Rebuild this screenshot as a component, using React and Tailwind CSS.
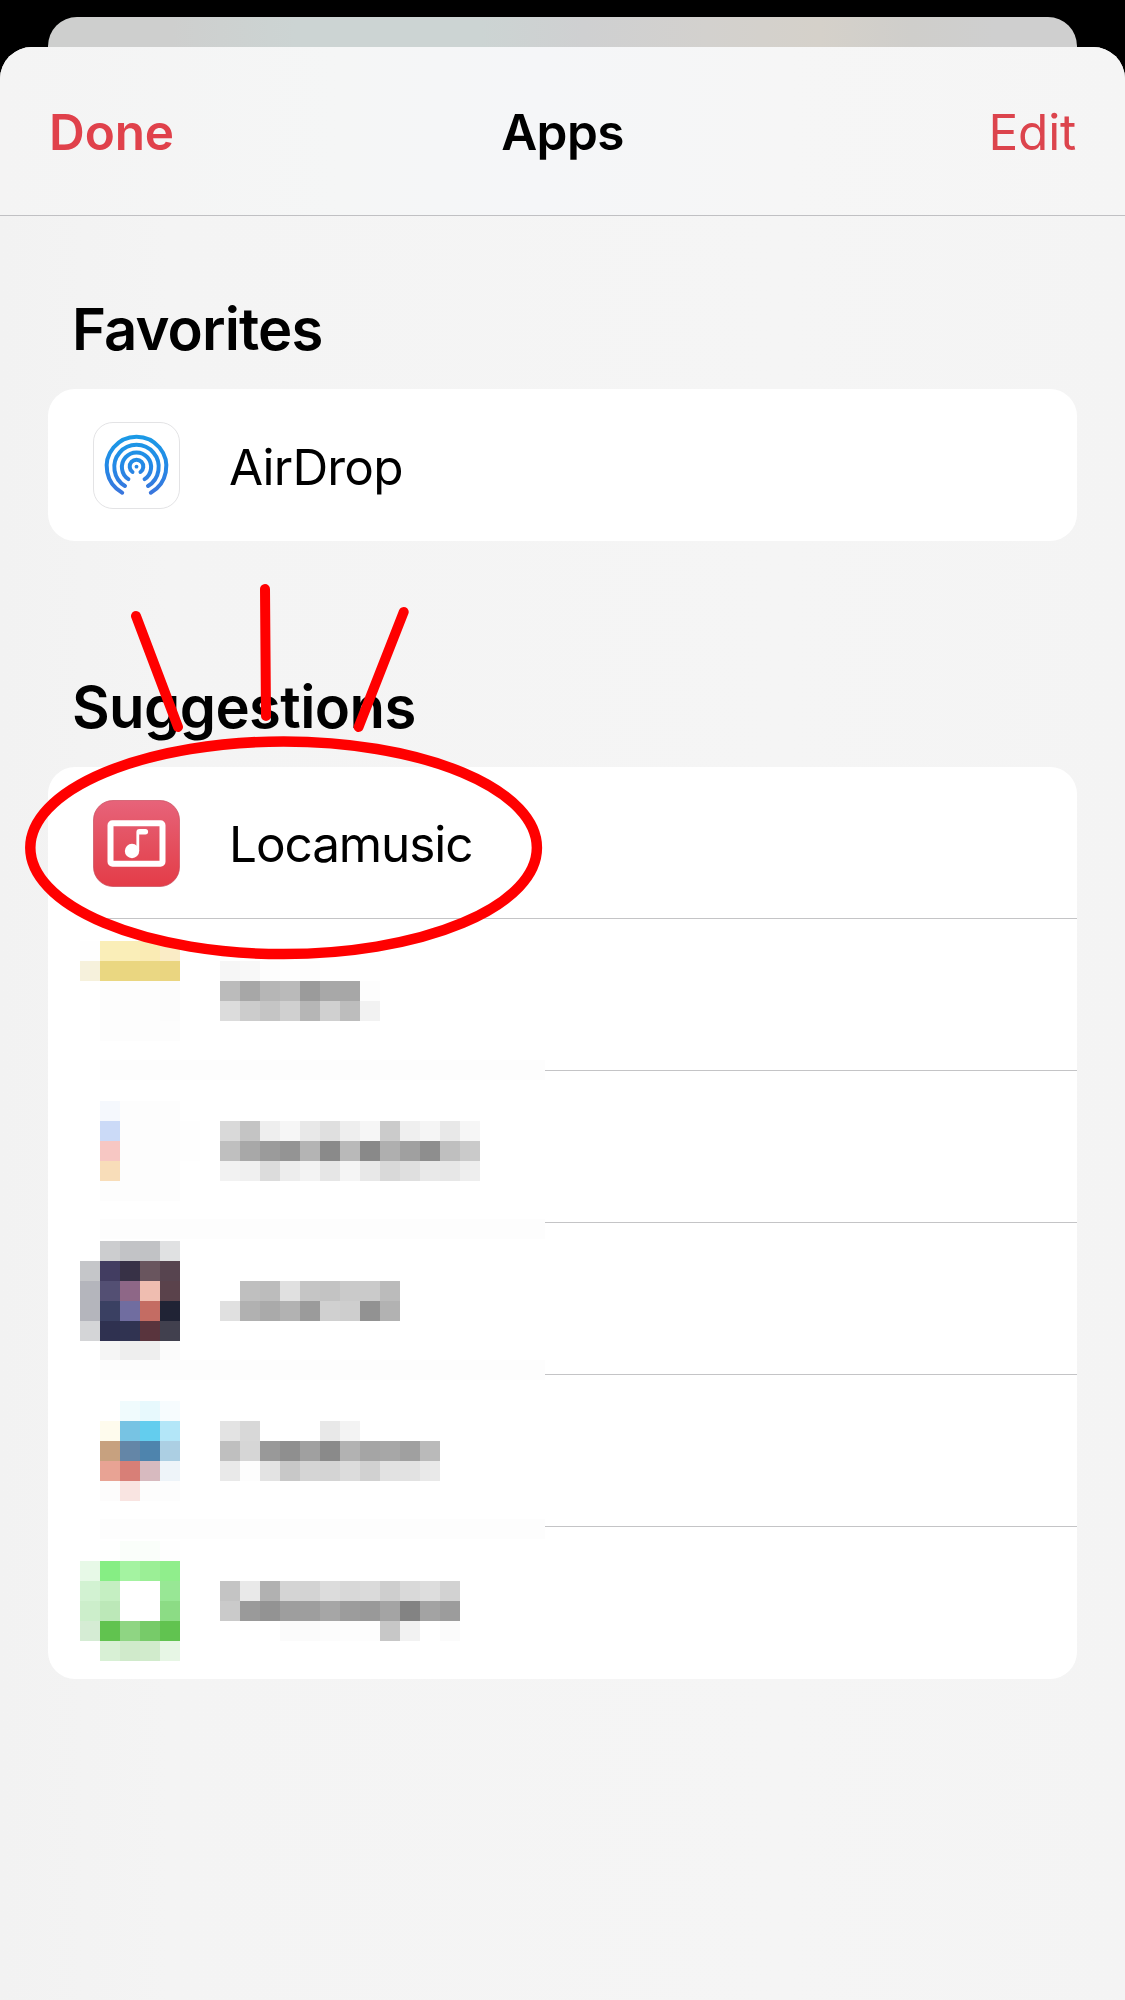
const _ = null;

const rows = [
  {
    pad: 'pt-[22px]',
    strip: 'bottom-[-9px]',
    icon: [
      ['#fefefe', '#faeeb8', '#faeeb8', '#faebb4', '#faecc6'],
      ['#f6f1dc', '#ead781', '#ead680', '#ead783', '#ead580'],
      [_, '#fdfdfd', '#fdfdfd', '#fdfdfd', '#fcfcfc'],
      [_, '#fdfdfd', '#fdfdfd', '#fdfdfd', '#fcfcfc'],
      [_, '#fdfdfd', '#fdfdfd', '#fdfdfd', '#fdfdfd'],
    ],
    text: [
      [],
      ['#f6f6f6', '#f8f8f8', '#fdfdfd', '#fefefe', '#fdfdfd'],
      ['#bbbbbb', '#a7a7a7', '#b6b6b6', '#bababa', '#9b9b9b', '#a8a8a8', '#a7a7a7', '#fdfdfd'],
      ['#dcdcdc', '#cccccc', '#c5c5c5', '#d0d0d0', '#b6b6b6', '#d0d0d0', '#bdbdbd', '#f2f2f2'],
    ],
  },
  {
    pad: 'pt-[30px]',
    strip: 'bottom-[-16px]',
    icon: [
      [_, '#f5f8fd', '#fdfdfd', '#fdfdfd', '#fdfdfd'],
      [_, '#cbdaf7', '#fdfdfd', '#fdfdfd', '#fdfdfd', '#fefefe'],
      [_, '#f7c7c3', '#fdfdfd', '#fdfdfd', '#fdfdfd', '#fefefe'],
      [_, '#f8ddb9', '#fdfdfd', '#fdfdfd', '#fdfdfd'],
      [_, '#fdfdfd', '#fdfdfd', '#fdfdfd', '#fdfdfd'],
    ],
    text: [
      [],
      ['#d9d9d9', '#c4c4c4', '#eeeeee', '#f6f6f6', '#e8e8e8', '#dfdfdf', '#eeeeee', '#f6f6f6', '#cbcbcb', '#efefef', '#f5f5f5', '#e8e8e8', '#f6f6f6'],
      ['#bfbfbf', '#a8a8a8', '#9b9b9b', '#949494', '#b4b4b4', '#8a8a8a', '#b9b9b9', '#898989', '#afafaf', '#a0a0a0', '#8e8e8e', '#bfbfbf', '#cacaca'],
      ['#f2f2f2', '#f0f0f0', '#dcdcdc', '#ededed', '#f3f3f3', '#e6e6e6', '#f5f5f5', '#e8e8e8', '#d9d9d9', '#dfdfdf', '#e9e9e9', '#e7e7e7', '#eeeeee'],
    ],
  },
  {
    pad: 'pt-[18px]',
    strip: 'bottom-[-5px]',
    icon: [
      [_, '#cccdcf', '#c2c3c6', '#c1c2c5', '#e0e1e2'],
      ['#c5c6c9', '#423d61', '#373146', '#69555e', '#57444f'],
      ['#b4b5bc', '#534f73', '#8e6787', '#efbdb0', '#5a424b'],
      ['#b4b5bc', '#3a4062', '#706da0', '#c46c63', '#202335'],
      ['#d4d5d7', '#2f3150', '#303351', '#59343d', '#41404e'],
      [_, '#f5f5f5', '#eeeeee', '#eeeeee', '#fbfbfb'],
    ],
    text: [
      [],
      [],
      [_, '#bfbfbf', '#bcbcbc', '#e0e0e0', '#c5c5c5', '#c3c3c3', '#cacaca', '#cacaca', '#bbbbbb'],
      ['#e0e0e0', '#b1b1b1', '#aaaaaa', '#b2b2b2', '#9b9b9b', '#d0d0d0', '#cecece', '#929292', '#b2b2b2'],
    ],
  },
  {
    pad: 'pt-[26px]',
    strip: 'bottom-[-12px]',
    icon: [
      [_, _, '#f0fbfd', '#e7f9fd', '#f7fcfe'],
      [_, '#fefbed', '#77c3e3', '#63cdee', '#b3e6f8'],
      [_, '#c7a17f', '#6486a7', '#4e84ad', '#accfe3'],
      [_, '#e8a394', '#d87f77', '#d7babf', '#eef4f9'],
      [_, '#fdfcfc', '#f9e4e1', '#fdfdfd', '#fdfdfd'],
    ],
    text: [
      [],
      ['#e3e3e3', '#d8d8d8', _, _, _, '#e8e8e8', '#f3f3f3'],
      ['#bfbfbf', '#d6d6d6', '#999999', '#8f8f8f', '#a0a0a0', '#8a8a8a', '#b2b2b2', '#a5a5a5', '#a7a7a7', '#a0a0a0', '#bababa'],
      ['#e9e9e9', '#fdfdfd', '#e3e3e3', '#c8c8c8', '#d5d5d5', '#d4d4d4', '#dcdcdc', '#d1d1d1', '#e2e2e2', '#e2e2e2', '#e9e9e9'],
    ],
  },
  {
    pad: 'pt-[14px]',
    icon: [
      [_, '#fefffe', '#fafefa', '#fafefa', '#fefefe'],
      ['#e7f9e7', '#86ee84', '#a4f3a1', '#9bef96', '#90ee8c'],
      ['#d2f2d2', '#c5efc2', '#ffffff', '#ffffff', '#98e795'],
      ['#cceecb', '#bce8b8', '#ffffff', '#ffffff', '#8cdc85'],
      ['#d5ecd4', '#61c34f', '#8fd583', '#77cb69', '#61c350'],
      [_, '#d8f0d5', '#d0eacb', '#d1ebcc', '#e7f6e5'],
    ],
    text: [
      [],
      [],
      ['#c4c4c4', '#e9e9e9', '#b1b1b1', '#d4d4d4', '#d3d3d3', '#dcdcdc', '#d8d8d8', '#dadada', '#cecece', '#d9d9d9', '#dddddd', '#d2d2d2'],
      ['#cacaca', '#9a9a9a', '#939393', '#9e9e9e', '#9e9e9e', '#a6a6a6', '#9c9c9c', '#999999', '#a4a4a4', '#838383', '#a3a3a3', '#9c9c9c'],
      [_, _, _, '#fbfbfb', '#fbfbfb', '#fcfcfc', '#fdfdfd', '#fdfdfd', '#c7c7c7', '#f2f2f2', _, '#fbfbfb'],
    ],
  },
];

function Mosaic({ cells }) {
  return (
    <div className="flex flex-col" aria-hidden="true">
      {cells.map((line, y) => (
        <div key={y} className="flex h-5">
          {line.map((color, x) => (
            <span key={x} className="h-5 w-5" style={{ backgroundColor: color ?? 'transparent' }} />
          ))}
        </div>
      ))}
    </div>
  );
}

function AirDropIcon() {
  return (
    <svg viewBox="0 0 87 87" className="size-[87px] shrink-0" fill="none">
      <defs>
        <linearGradient id="drop" gradientUnits="userSpaceOnUse" x1="0" y1="12" x2="0" y2="74">
          <stop offset="0" stopColor="#1b9be6" />
          <stop offset="0.5" stopColor="#2389e6" />
          <stop offset="1" stopColor="#3c74dc" />
        </linearGradient>
      </defs>
      <rect x="0.5" y="0.5" width="86" height="86" rx="19.5" fill="#fff" stroke="#e3e3e5" />
      <g stroke="url(#drop)" strokeWidth="4" strokeLinecap="round">
        <path d="M29.2 70.7 A29.8 29.8 0 1 1 57.8 70.7" />
        <path d="M32 64 A22.2 22.2 0 1 1 55 64" />
        <path d="M35.4 57.2 A14.6 14.6 0 1 1 51.6 57.2" />
        <path d="M39.5 50 A6.8 6.8 0 1 1 47.5 50" />
      </g>
      <circle cx="43.5" cy="44.7" r="1.9" fill="#2687e5" />
    </svg>
  );
}

function LocamusicIcon() {
  return (
    <svg viewBox="0 0 87 87" className="size-[87px] shrink-0" fill="none">
      <defs>
        <linearGradient id="loca" x1="0" y1="0" x2="0" y2="1">
          <stop offset="0" stopColor="#e7637a" />
          <stop offset="0.5" stopColor="#e4505f" />
          <stop offset="1" stopColor="#e43c48" />
        </linearGradient>
      </defs>
      <rect x="0.5" y="0.5" width="86" height="86" rx="19.5" fill="url(#loca)" stroke="#c94c5c" strokeWidth="0.7" />
      <path
        fillRule="evenodd"
        fill="#fff"
        d="M19.5 20.3h48a5 5 0 0 1 5 5v36.500a5 5 0 0 1-5 5h-48a5 5 0 0 1-5-5v-36.500a5 5 0 0 1 5-5ZM20.500 26.200v34.500h46v-34.500Z"
      />
      <circle cx="39" cy="51" r="7.200" fill="#fff" />
      <path d="M43.400 51V32a3 3 0 0 1 3-3h6a2.700 2.700 0 0 1 0 5.400h-6.200V51Z" fill="#fff" />
    </svg>
  );
}

function Annotation() {
  return (
    <svg
      viewBox="0 0 540 400"
      className="pointer-events-none absolute top-[-187px] left-[-38px] h-[400px] w-[540px]"
      fill="none"
      stroke="#ff0000"
      strokeLinecap="round"
    >
      <ellipse cx="273.600" cy="267.800" rx="253.300" ry="106.300" strokeWidth="10.500" />
      <path d="M126 36L168 147M255 9L256 136M393.700 32L348.600 147" strokeWidth="10" />
    </svg>
  );
}

export default function App() {
  return (
    <div className="flex h-[2000px] w-[1125px] flex-col overflow-hidden bg-black pt-[17px] font-['Inter','Liberation_Sans',sans-serif] text-black">
      <div className="mx-12 h-[30px] shrink-0 rounded-t-[29px] bg-[linear-gradient(90deg,#cecfce_0%,#cecfce_12%,#ccd4d3_24%,#ccd4d3_42%,#cfd0d1_52%,#d3d1ce_64%,#d5d1ca_75%,#cfcecb_84%,#cfcfcf_92%)]" />
      <main className="flex grow flex-col rounded-t-[32px] bg-[linear-gradient(90deg,#f2f2f2_0%,#f4f4f4_15%,#f5f5f5_70%,#f4f4f4_100%)]">
        <header className="flex h-[169px] shrink-0 items-center justify-between rounded-t-[32px] border-b border-[#c0c0c3] bg-[linear-gradient(90deg,#f4f4f4_0%,#f5f6f6_30%,#f5f6f8_48%,#f6f6f6_70%,#f5f5f5_100%)] px-12 pt-[2px] text-[49.5px] leading-[60px]">
          <button className="w-[200px] pl-[1px] text-left font-semibold tracking-[-0.1px] text-[#e0414b]">Done</button>
          <h1 className="font-semibold tracking-[-0.6px]">Apps</h1>
          <button className="w-[200px] pr-[1px] text-right tracking-[-0.2px] text-[#dc444d]">Edit</button>
        </header>

        <section className="px-12 pt-[77px]">
          <h2 className="h-[96px] pl-6 text-[58px] leading-[72px] font-semibold tracking-[-0.9px]">Favorites</h2>
          <div className="flex h-[152px] items-center rounded-[27px] bg-white pl-[45px]">
            <AirDropIcon />
            <span className="pt-[3px] pl-[49px] text-[49.5px] leading-[60px] tracking-[-0.8px]">AirDrop</span>
          </div>
        </section>

        <section className="px-12 pt-[130px]">
          <h2 className="h-[96px] pl-6 text-[58px] leading-[72px] font-semibold tracking-[-0.6px]">Suggestions</h2>
          <div className="relative rounded-[27px] bg-white">
            <div className="flex h-[151px] items-center pt-px pl-[45px]">
              <LocamusicIcon />
              <span className="pt-[2px] pl-[49px] text-[49.5px] leading-[60px] tracking-[-1.1px]">Locamusic</span>
            </div>
            <div className="ml-[45px] h-px bg-[#c4c4c6]" />
            {rows.map(({ pad, strip, icon, text }) => (
              <div key={pad} className={`relative flex h-[152px] pl-8 ${pad}`}>
                <div className="w-[140px]">
                  <Mosaic cells={icon} />
                </div>
                <Mosaic cells={text} />
                {strip && (
                  <>
                    <div className="absolute right-0 bottom-0 left-[497px] h-px bg-[#c4c4c6]" />
                    <div className={`absolute left-[52px] h-5 w-[445px] bg-[#fdfdfd] ${strip}`} />
                  </>
                )}
              </div>
            ))}
            <Annotation />
          </div>
        </section>
      </main>
    </div>
  );
}
